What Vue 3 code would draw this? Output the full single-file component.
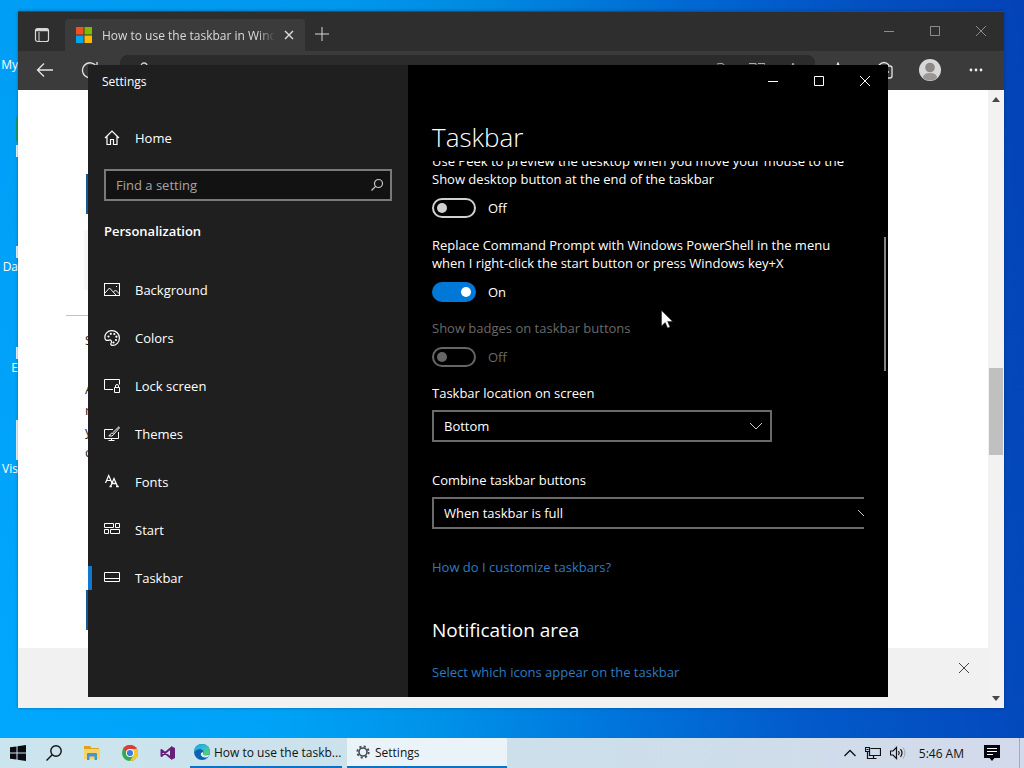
<script setup>
import { ref } from 'vue'

const desktopIcons = [
  { label: 'My', kind: 'plain' },
  { label: '', kind: 'chrome' },
  { label: 'Da', kind: 'file' },
  { label: 'E', kind: 'file' },
  { label: 'Vis', kind: 'tall' },
]

const navItems = [
  { label: 'Background', icon: 'background' },
  { label: 'Colors', icon: 'colors' },
  { label: 'Lock screen', icon: 'lock' },
  { label: 'Themes', icon: 'themes' },
  { label: 'Fonts', icon: 'fonts' },
  { label: 'Start', icon: 'start' },
  { label: 'Taskbar', icon: 'taskbar' },
]

const activeItem = ref('Taskbar')
const search = ref('')
const peek = ref(false)
const powershell = ref(true)
const badges = ref(false)
const location = ref('Bottom')
const combine = ref('When taskbar is full')
</script>

<template>
  <div class="screen">
    <main class="desktop">
      <div class="shortcuts">
        <div v-for="(item, i) in desktopIcons" :key="i" class="shortcut">
          <span class="shortcut-icon" :class="item.kind"></span>
          <span class="shortcut-label">{{ item.label }}</span>
        </div>
      </div>

      <section class="browser" aria-label="Browser">
        <header class="tabstrip">
          <button class="workspace" aria-label="Tab actions">
            <svg width="16" height="16" viewBox="0 0 16 16" fill="none" stroke="#d8d8d8">
              <rect x="1.5" y="1.5" width="13" height="13" rx="2" stroke-width="1.2" />
              <path d="M2 3.5h12M2 2.5h12" stroke-width="1.6" />
              <path d="M5 5v9" />
            </svg>
          </button>
          <div class="tab">
            <svg width="16" height="16" viewBox="0 0 16 16">
              <path fill="#f25022" d="M0 0h7.5v7.5H0z" />
              <path fill="#7fba00" d="M8.500 0H16v7.500H8.500z" />
              <path fill="#00a4ef" d="M0 8.500h7.500V16H0z" />
              <path fill="#ffb900" d="M8.500 8.500H16V16H8.500z" />
            </svg>
            <span class="tab-title">How to use the taskbar in Windows</span>
            <button class="tab-close" aria-label="Close tab">
              <svg width="10" height="10" viewBox="0 0 10 10" stroke="#dedede" stroke-width="1.400"><path d="M1 1l8 8M9 1l-8 8" /></svg>
            </button>
          </div>
          <button class="new-tab" aria-label="New tab">
            <svg width="14" height="14" viewBox="0 0 14 14" stroke="#d6d6d6"><path d="M7 0v14M0 7h14" /></svg>
          </button>
          <div class="captions dim">
            <button aria-label="Minimize browser"><svg width="10" height="10" viewBox="0 0 10 10"><path d="M0 5.500h10" /></svg></button>
            <button aria-label="Maximize browser"><svg width="10" height="10" viewBox="0 0 10 10"><path d="M.5.5h9v9h-9z" /></svg></button>
            <button aria-label="Close browser"><svg width="10" height="10" viewBox="0 0 10 10"><path d="M0 0l10 10M10 0L0 10" /></svg></button>
          </div>
        </header>

        <div class="toolbar">
          <button aria-label="Back" class="tool">
            <svg width="18" height="16" viewBox="0 0 18 16" fill="none" stroke="#e4e4e4" stroke-width="1.300"><path d="M17 8H1.500M8 1.500L1.500 8 8 14.500" /></svg>
          </button>
          <button aria-label="Refresh" class="tool refresh">
            <svg width="18" height="18" viewBox="0 0 18 18" fill="none" stroke="#e4e4e4" stroke-width="1.300"><path d="M15.500 5.500A7.500 7.500 0 1 0 16.500 9M16 1v5h-5" /></svg>
          </button>
          <div class="address">
            <svg width="12" height="16" viewBox="0 0 12 16" fill="none" stroke="#cfcfcf" stroke-width="1.300"><path d="M3 6V4a3 3 0 0 1 6 0v2M1 6h10v8H1z" /></svg>
            <span class="grow"></span>
            <svg width="16" height="16" viewBox="0 0 16 16" fill="none" stroke="#aaa"><path d="M4 2q6-2 8 2v10" /></svg>
            <svg width="16" height="16" viewBox="0 0 16 16" fill="none" stroke="#aaa"><path d="M0 1.500h7v12H0M9 1.500h7v12H9" /></svg>
            <svg width="16" height="16" viewBox="0 0 16 16" fill="none" stroke="#aaa"><path d="M8 1l2 5h5l-4 4 1 5-4-3-4 3 1-5-4-4h5z" /></svg>
          </div>
          <button aria-label="Favorites" class="tool">
            <svg width="16" height="16" viewBox="0 0 16 16" fill="none" stroke="#e4e4e4" stroke-width="1.300"><path d="M8 1l2 5h5l-4 4 1 5-4-3-4 3 1-5-4-4h5z" /></svg>
          </button>
          <button aria-label="Collections" class="tool">
            <svg width="18" height="18" viewBox="0 0 18 18" fill="none" stroke="#e4e4e4" stroke-width="1.300"><path d="M4 4q5-5 10 0" /><rect x="5" y="5" width="12" height="12" rx="2" /><path d="M11 8v6M8 11h6" /></svg>
          </button>
          <button aria-label="Profile" class="tool">
            <svg width="22" height="22" viewBox="0 0 22 22">
              <circle cx="11" cy="11" r="11" fill="#d8d8d8" />
              <circle cx="11" cy="8.500" r="4.800" fill="#8d8986" />
              <path d="M4 19q0-5 7-5t7 5a11 11 0 0 1-14 0z" fill="#9b9794" />
            </svg>
          </button>
          <button aria-label="More" class="tool">
            <svg width="14" height="4" viewBox="0 0 14 4" fill="#eee"><circle cx="2" cy="2" r="1.400" /><circle cx="7" cy="2" r="1.400" /><circle cx="12" cy="2" r="1.400" /></svg>
          </button>
        </div>

        <div class="viewport">
          <div class="page">
            <div class="article">
              <span class="page-button"></span>
              <span class="page-panel"></span>
              <hr />
              <h3>S</h3>
              <p>A<br />r<br />y<br />c</p>
              <span class="page-button lower"></span>
            </div>
            <footer class="notice">
              <button aria-label="Dismiss">
                <svg width="10" height="10" viewBox="0 0 10 10" stroke="#444"><path d="M0 0l10 10M10 0L0 10" /></svg>
              </button>
            </footer>
          </div>
          <div class="scrollbar">
            <svg width="8" height="5" viewBox="0 0 8 5" fill="#484848"><path d="M4 0l4 5H0z" /></svg>
            <span class="track"><span class="thumb"></span></span>
            <svg width="8" height="5" viewBox="0 0 8 5" fill="#484848"><path d="M4 5l4-5H0z" /></svg>
          </div>
        </div>
      </section>

      <section class="settings" aria-label="Settings">
        <aside class="sidebar">
          <div class="window-title">Settings</div>
          <a href="#home" class="home">
            <svg width="16" height="16" viewBox="0 0 16 16" fill="none" stroke="#fff" stroke-width="1.200"><path d="M1 8l7-7 7 7M3 6.500v8h3.500v-5h3v5H13v-8" /></svg>
            <span>Home</span>
          </a>
          <div class="search">
            <input v-model="search" type="text" placeholder="Find a setting" aria-label="Find a setting" />
            <svg width="14" height="14" viewBox="0 0 14 14" fill="none" stroke="#c8c8c8" stroke-width="1.200"><circle cx="8.500" cy="5.500" r="4" /><path d="M5.600 8.400L1.500 12.500" /></svg>
          </div>
          <h2>Personalization</h2>
          <nav>
            <a
              v-for="item in navItems"
              :key="item.label"
              :href="'#' + item.icon"
              :class="{ active: item.label === activeItem }"
              @click.prevent="activeItem = item.label"
            >
              <svg width="16" height="16" viewBox="0 0 16 16" fill="none" stroke="#fff">
                <g v-if="item.icon === 'background'">
                  <rect x=".5" y="1.500" width="15" height="12" />
                  <path d="M.5 11.500l5-5.500 7 7.500M9.500 10l2-2 4 4" />
                  <path d="M12 4.500h1" />
                </g>
                <g v-else-if="item.icon === 'colors'">
                  <path d="M1 8.500C.3 4 3.500.6 7.800.6c4.400 0 7.600 3.300 7.600 7.300 0 4.500-3.200 7.500-7 7.500-1.800 0-1.900-1.400-1.200-2.600.8-1.500-.3-3.300-2-2.700C3 10.900 1.300 10.400 1 8.500z" stroke-width="1.200" />
                  <g fill="#fff" stroke="none"><circle cx="4.500" cy="6.500" r="1.100" /><circle cx="6.800" cy="3.800" r="1.100" /><circle cx="10.300" cy="4" r="1.100" /><circle cx="12.400" cy="6.700" r="1.100" /><circle cx="12" cy="10" r="1.100" /><circle cx="9.500" cy="12.500" r="1.100" /></g>
                </g>
                <g v-else-if="item.icon === 'lock'">
                  <path d="M9 11.500H.5v-10h15v5" />
                  <path d="M10.500 9.500h5v5h-5zM11.500 9.500V8a1.500 1.500 0 0 1 3 0v1.500" />
                </g>
                <g v-else-if="item.icon === 'themes'">
                  <path d="M9 3.500H.5v9h14V6M7.500 12.500v2M4.500 14.500h6" />
                  <path d="M14.800.8L8.500 7l1.200 1.300L15.300 2zM8.300 7.200c-1.500 0-2 .8-2.200 1.800q-.3.700-1.300.8 3.800 1.200 4.900-1.300" />
                </g>
                <g v-else-if="item.icon === 'fonts'">
                  <path d="M1.500 9L4.700 1.500 8 9M2.600 6.500h4.200" stroke-width="1.200" />
                  <path d="M6.500 12.500L10 4.500l3.500 8M7.800 9.500h4.400M5.500 12.500h2.300M12 12.500h2.800" stroke-width="1.300" />
                </g>
                <g v-else-if="item.icon === 'start'">
                  <path d="M.5 1.500h9v4h-9zM11.500 1.500h4v4h-4zM.5 7.500h4v4h-4zM6.500 7.500h9v4h-9z" />
                </g>
                <g v-else>
                  <path d="M.5 2.500h15v9H.5zM.5 8.500h15" />
                </g>
              </svg>
              <span>{{ item.label }}</span>
            </a>
          </nav>
        </aside>

        <div class="content">
          <div class="captions">
            <button aria-label="Minimize"><svg width="10" height="10" viewBox="0 0 10 10"><path d="M0 5.500h10" /></svg></button>
            <button aria-label="Maximize"><svg width="10" height="10" viewBox="0 0 10 10"><path d="M.5.5h9v9h-9z" /></svg></button>
            <button aria-label="Close"><svg width="10" height="10" viewBox="0 0 10 10"><path d="M0 0l10 10M10 0L0 10" /></svg></button>
          </div>
          <h1>Taskbar</h1>
          <div class="pane">
            <div class="scrolled">
              <label class="text" for="peek">Use Peek to preview the desktop when you move your mouse to the<br />Show desktop button at the end of the taskbar</label>
              <div class="toggle"><input id="peek" v-model="peek" type="checkbox" role="switch" /><span>{{ peek ? 'On' : 'Off' }}</span></div>

              <label class="text" for="powershell">Replace Command Prompt with Windows PowerShell in the menu<br />when I right-click the start button or press Windows key+X</label>
              <div class="toggle tight"><input id="powershell" v-model="powershell" type="checkbox" role="switch" /><span>{{ powershell ? 'On' : 'Off' }}</span></div>

              <label class="text off" for="badges">Show badges on taskbar buttons</label>
              <div class="toggle tight off"><input id="badges" v-model="badges" type="checkbox" role="switch" disabled /><span>{{ badges ? 'On' : 'Off' }}</span></div>

              <label class="text" for="location">Taskbar location on screen</label>
              <div class="select">
                <select id="location" v-model="location">
                  <option>Left</option>
                  <option>Top</option>
                  <option>Right</option>
                  <option>Bottom</option>
                </select>
                <svg width="14" height="8" viewBox="0 0 14 8" fill="none" stroke="#ccc"><path d="M1 1l6 6 6-6" /></svg>
              </div>

              <label class="text" for="combine">Combine taskbar buttons</label>
              <div class="select wide">
                <select id="combine" v-model="combine">
                  <option>Always, hide labels</option>
                  <option>When taskbar is full</option>
                  <option>Never</option>
                </select>
                <svg width="14" height="8" viewBox="0 0 14 8" fill="none" stroke="#ccc"><path d="M1 1l6 6 6-6" /></svg>
              </div>

              <a href="#customize" class="link">How do I customize taskbars?</a>
              <h2>Notification area</h2>
              <a href="#icons" class="link">Select which icons appear on the taskbar</a>
            </div>
          </div>
          <span class="pane-thumb"></span>
        </div>
      </section>

      <svg class="cursor" width="12" height="19" viewBox="0 0 12 19"><path d="M.5.5v15.500l3.700-3.500 2.400 5.500 2.400-1-2.400-5.500h5z" fill="#fff" stroke="#222" stroke-width=".5" /></svg>
    </main>

    <footer class="taskbar">
      <button class="pin" aria-label="Start">
        <svg width="16" height="16" viewBox="0 0 16 16" fill="#0b0b12"><path d="M0 2.300L6.500 1.400v6.100H0zM7.500 1.300L16 0v7.500H7.500zM0 8.500h6.500v6.100L0 13.700zM7.500 8.500H16V16l-8.500-1.300z" /></svg>
      </button>
      <button class="pin" aria-label="Search">
        <svg width="16" height="16" viewBox="0 0 16 16" fill="none" stroke="#111" stroke-width="1.400"><circle cx="10" cy="6" r="5.200" /><path d="M6.200 9.800L.5 15.500" /></svg>
      </button>
      <button class="pin" aria-label="File Explorer">
        <svg width="16" height="16" viewBox="0 0 16 16"><path d="M0 1h6l1.500 2H15v3H0z" fill="#e0a21c" /><path d="M0 4h16v10H0z" fill="#f8d36b" /><path d="M3 15V9q0-1 1-1h8q1 0 1 1v6h-2.500v-3.500h-5V15z" fill="#4397cf" /></svg>
      </button>
      <button class="pin" aria-label="Chrome">
        <svg width="16" height="16" viewBox="0 0 16 16"><circle cx="8" cy="8" r="8" fill="#34a853" /><path d="M8 8L1.070 4A8 8 0 0 1 14.930 4z" fill="#dd3e31" /><path d="M8 8V4h6.930A8 8 0 0 1 8 16l3.500-6z" fill="#f7c52e" /><circle cx="8" cy="8" r="4" fill="#fff" /><circle cx="8" cy="8" r="3.100" fill="#3b7de9" /></svg>
      </button>
      <button class="pin" aria-label="Visual Studio">
        <svg width="16" height="16" viewBox="0 0 16 16" fill="none" stroke="#68217a" stroke-width="2"><path d="M1.500 5v6L11 3v10z" stroke-linejoin="round" /><path d="M11 1l4 2v10l-4 2z" fill="#68217a" stroke="none" /></svg>
      </button>
      <button class="task">
        <svg width="16" height="16" viewBox="0 0 16 16">
          <defs>
            <linearGradient id="wave" x1="0" y1="0" x2="1" y2="1"><stop offset="0" stop-color="#249fd9" /><stop offset=".5" stop-color="#32bfd0" /><stop offset="1" stop-color="#67d24d" /></linearGradient>
          </defs>
          <circle cx="8" cy="8" r="8" fill="#0c62b5" />
          <path d="M0 8a8 8 0 0 1 16 0q0 3-4 3-3 0-3-1.500 1-1 0-3Q5 3 0 8z" fill="url(#wave)" />
          <path d="M9 9.500q0 2 3.500 1.800 2 0 3-1.300-.4 1.700-1.500 3-5 1.500-7-1.500-1-3 2-3.500z" fill="#d8edf7" />
        </svg>
        <span>How to use the taskb...</span>
      </button>
      <button class="task current">
        <svg width="14" height="14" viewBox="0 0 14 14" fill="none" stroke="#434a57"><circle cx="7" cy="7" r="4" stroke-width="1.600" /><circle cx="7" cy="7" r="5.700" stroke-width="1.800" stroke-dasharray="2.200 2.276" /></svg>
        <span>Settings</span>
      </button>
      <div class="tray">
        <button aria-label="Show hidden icons"><svg width="12" height="8" viewBox="0 0 12 8" fill="none" stroke="#111" stroke-width="1.300"><path d="M.5 7L6 1.500 11.500 7" /></svg></button>
        <button aria-label="Network"><svg width="16" height="14" viewBox="0 0 16 14" fill="none" stroke="#111" stroke-width="1.200"><path d="M5.500 2.500h10v7h-11v-4M8.500 9.500v3M5.500 12.500h6M2.500 5.500v7h3M.5 1.500h4v4h-4zM1.500 3.500h2" /></svg></button>
        <button aria-label="Volume"><svg width="16" height="14" viewBox="0 0 16 14" fill="none" stroke="#111"><path d="M.5 5v4h2.500l3.500 3.500v-11L3 5z" stroke-width="1.200" /><path d="M8.500 5q1.500 2 0 4M10.500 3.200q3 3.800 0 7.600" stroke-width="1.200" /><path d="M13 1.500q4 5.500 0 11" stroke="#9aa" /></svg></button>
        <time>5:46 AM</time>
        <button aria-label="Notifications"><svg width="16" height="16" viewBox="0 0 16 16"><path d="M0 0h16v13h-5.500L8 16l-2.500-3H0z" fill="#050510" /><path d="M3 3.500h10M3 6.500h10M3 9.500h6" stroke="#fff" /></svg></button>
        <span class="peek-edge"></span>
      </div>
    </footer>
  </div>
</template>

<style>
html,
body {
  margin: 0;
}
</style>

<style scoped>
* {
  box-sizing: border-box;
}

.screen {
  display: flex;
  flex-direction: column;
  height: 100vh;
  overflow: hidden;
  font-family: "Open Sans", "Noto Sans", sans-serif;
  font-size: 13px;
}

button {
  display: flex;
  align-items: center;
  justify-content: center;
  padding: 0;
  border: 0;
  background: none;
  color: inherit;
  font: inherit;
}

svg {
  display: block;
  flex: none;
}

h1,
h2,
h3,
p {
  margin: 0;
}

a {
  text-decoration: none;
}

/* Desktop */
.desktop {
  position: relative;
  flex: 1;
  min-height: 0;
  overflow: hidden;
  background:
    linear-gradient(180deg, rgba(0, 70, 160, 0.1), rgba(0, 180, 255, 0.1)),
    linear-gradient(95deg, #00a8ff 0%, #00a0f5 32%, #0090e8 45%, #006fd8 62%, #0350c4 80%, #033db5 100%);
}

.shortcuts {
  position: absolute;
  top: 16px;
  left: 0;
  width: 18px;
  color: #fff;
  font-size: 12px;
}

.shortcut {
  display: flex;
  flex-direction: column;
  align-items: flex-end;
  height: 101px;
}

.shortcut-icon {
  width: 2px;
  height: 40px;
}

.file {
  border-bottom: 12px solid #eaf7ff;
}

.chrome {
  border-top: 24px solid #159b70;
  border-bottom: 12px solid #eaf7ff;
}

.tall {
  background: #eaf7ff;
}

.shortcut-label {
  line-height: 18px;
}

/* Browser */
.browser {
  position: absolute;
  top: 11px;
  right: 20px;
  bottom: 30px;
  left: 18px;
  display: flex;
  flex-direction: column;
  background: #fff;
  box-shadow: 0 0 3px rgba(0, 30, 60, 0.4);
}

.tabstrip {
  display: flex;
  align-items: flex-end;
  height: 40px;
  background: #2e2e2e;
  border-top: 1px solid #454545;
}

.workspace {
  width: 47px;
  height: 32px;
}

.tab {
  display: flex;
  align-items: center;
  width: 240px;
  height: 32px;
  padding: 0 8px 0 11px;
  gap: 10px;
  border-radius: 4px 4px 0 0;
  background: #3b3b3b;
}

.tab-title {
  flex: 1;
  min-width: 0;
  overflow: hidden;
  color: #dadada;
  font-size: 12px;
  white-space: nowrap;
  mask-image: linear-gradient(90deg, #000 90%, transparent);
}

.tab-close {
  width: 16px;
  height: 16px;
  margin-left: -4px;
}

.new-tab {
  width: 34px;
  height: 34px;
}

.captions {
  display: flex;
  justify-content: flex-end;
  height: 32px;
}

.captions button {
  width: 46px;
}

.captions svg {
  fill: none;
  stroke: #fff;
}

.captions.dim {
  align-self: stretch;
  height: auto;
  margin-left: auto;
  padding-bottom: 2px;
}

.dim svg {
  stroke: #8c8c8c;
}

.toolbar {
  display: flex;
  align-items: center;
  height: 39px;
  padding: 0 5px 2px 0;
  background: #3b3b3b;
}

.tool {
  width: 46px;
  height: 32px;
}

.tool:first-child {
  width: 54px;
}

.refresh {
  width: 36px;
  margin-right: 12px;
}

.address {
  display: flex;
  flex: 1;
  align-items: center;
  gap: 20px;
  height: 30px;
  padding: 0 14px 0 18px;
  border-radius: 8px;
  background: #2b2b2b;
}

.grow {
  flex: 1;
}

.viewport {
  display: flex;
  flex: 1;
  min-height: 0;
}

.page {
  display: flex;
  flex: 1;
  flex-direction: column;
  min-width: 0;
}

.article {
  flex: 1;
  min-height: 0;
  overflow: hidden;
  padding: 84px 144px 0 48px;
  color: #222;
}

.page-button {
  display: block;
  width: 160px;
  height: 40px;
  margin-left: 20px;
  background: #155a91;
}

.page-panel {
  display: block;
  height: 60px;
  margin: 16px 0 25px 18px;
  background: #f7f7f7;
}

.article hr {
  margin: 0 0 14px;
  border: 0;
  border-top: 1px solid #c2c2c2;
}

.article h3,
.article p {
  margin-left: 19px;
  font-size: 13px;
  font-weight: 400;
  line-height: 21px;
}

.article p {
  margin-top: 28px;
}

.page-button.lower {
  margin-top: 127px;
}

.notice {
  display: flex;
  justify-content: flex-end;
  height: 60px;
  padding: 4px 8px;
  background: #f1f1f1;
}

.notice button {
  width: 32px;
  height: 32px;
}

.scrollbar {
  display: flex;
  flex-direction: column;
  align-items: center;
  justify-content: space-between;
  width: 16px;
  padding: 7px 0;
  background: #f2f2f2;
}

.track {
  display: flex;
  flex: 1;
  flex-direction: column;
  width: 14px;
  padding-top: 266px;
}

.thumb {
  height: 87px;
  background: #c0c0c0;
}

/* Settings window */
.settings {
  position: absolute;
  top: 65px;
  right: 136px;
  bottom: 41px;
  left: 88px;
  display: flex;
  color: #fff;
  font-size: 13px;
  background: #000;
}

.sidebar {
  width: 320px;
  background: #1f1f1f;
}

.window-title {
  height: 32px;
  padding-left: 14px;
  font-size: 12px;
  line-height: 34px;
}

.home,
nav a {
  display: flex;
  align-items: center;
  height: 48px;
  gap: 15px;
  padding-left: 16px;
  color: #fff;
}

.home {
  height: 40px;
  margin-top: 21px;
}

.search {
  display: flex;
  align-items: center;
  height: 32px;
  margin: 11px 16px 0;
  padding: 0 6px 0 10px;
  border: 2px solid #797979;
  background: #121212;
}

.search input {
  flex: 1;
  min-width: 0;
  padding: 0;
  border: 0;
  outline: 0;
  background: none;
  color: #fff;
  font: inherit;
}

.search input::placeholder {
  color: #a6a6a6;
  opacity: 1;
}

.sidebar h2 {
  margin: 20px 16px 0;
  font-size: 13px;
  font-weight: 600;
  line-height: 20px;
}

nav {
  margin-top: 25px;
}

nav a.active {
  position: relative;
}

nav a.active::before {
  content: "";
  position: absolute;
  top: 12px;
  left: 0;
  width: 4px;
  height: 24px;
  background: #1177d1;
}

.content {
  position: relative;
  display: flex;
  flex: 1;
  flex-direction: column;
  min-width: 0;
}

h1 {
  padding: 24px 24px 0;
  font-size: 26px;
  font-weight: 300;
  line-height: 32px;
}

.pane {
  flex: 1;
  min-height: 0;
  margin: 8px 24px 0;
  overflow: hidden;
}

.scrolled {
  display: flex;
  flex-direction: column;
  align-items: flex-start;
  margin-top: -9px;
  line-height: 18px;
}

.text {
  white-space: nowrap;
}

.text.off,
.toggle.off {
  color: #6a6a6a;
}

.toggle {
  display: flex;
  align-items: center;
  gap: 12px;
  height: 20px;
  margin: 10px 0 18px;
}

.toggle.tight {
  margin-bottom: 17px;
}

.toggle input {
  appearance: none;
  display: flex;
  align-items: center;
  width: 44px;
  height: 20px;
  margin: 0;
  padding: 0 3px;
  border: 2px solid #d0d0d0;
  border-radius: 10px;
}

.toggle input::before {
  content: "";
  width: 10px;
  height: 10px;
  border-radius: 50%;
  background: #d0d0d0;
}

.toggle input:checked {
  justify-content: flex-end;
  border-color: #0078d7;
  background: #0078d7;
}

.toggle input:checked::before {
  background: #fff;
}

.toggle input:disabled {
  border-color: #666;
}

.toggle input:disabled::before {
  background: #666;
}

.select {
  position: relative;
  flex: none;
  width: 340px;
  margin: 8px 0 29px;
}

.select.wide {
  width: 448px;
}

.select select {
  appearance: none;
  display: block;
  width: 100%;
  height: 32px;
  padding: 0 10px;
  border: 2px solid #6a6a6a;
  border-radius: 0;
  background: #000;
  color: #fff;
  font: inherit;
}

.select svg {
  position: absolute;
  top: 12px;
  right: 9px;
  pointer-events: none;
}

.link {
  color: #2b7cc0;
}

.scrolled h2 {
  margin: 40px 0 19px;
  font-size: 19px;
  font-weight: 400;
  line-height: 28px;
}

.pane-thumb {
  position: absolute;
  top: 172px;
  right: 2px;
  width: 2px;
  height: 134px;
  background: #858585;
}

.cursor {
  position: absolute;
  top: 310px;
  left: 661px;
  pointer-events: none;
}

/* Taskbar */
.taskbar {
  display: flex;
  align-items: stretch;
  height: 30px;
  background: linear-gradient(90deg, #cbe5ee, #ccdfea 55%, #d3daeb);
  color: #111;
  font-size: 12px;
}

.pin {
  width: 38px;
}

.pin:first-child {
  width: 35px;
}

.task {
  justify-content: flex-start;
  width: 152px;
  gap: 4px;
  margin-left: 3px;
  padding: 0 4px;
  border-bottom: 2px solid #0b72c5;
  white-space: nowrap;
}

.task.current {
  width: 160px;
  gap: 5px;
  margin-left: 5px;
  padding-left: 9px;
  background: #eaf4f8;
}

.tray {
  display: flex;
  align-items: center;
  gap: 9px;
  margin-left: auto;
}

.tray time {
  margin: 0 11px 0 4px;
}

.peek-edge {
  align-self: stretch;
  width: 5px;
  margin-left: 10px;
  border-left: 1px solid #a5aaba;
}
</style>
